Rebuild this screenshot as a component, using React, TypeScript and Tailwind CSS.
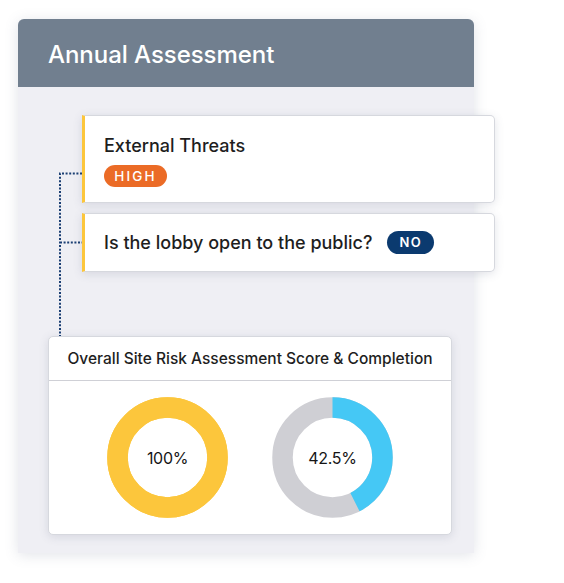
import React from 'react';

function Donut({ value, color, track, label }: { value: number; color: string; track: string; label: string }) {
  const r = 50;
  const c = 2 * Math.PI * r;
  return (
    <div className="relative w-[121px] h-[121px]">
      <svg width="121" height="121" viewBox="0 0 121 121" className="-rotate-90">
        <circle cx="60.5" cy="60.5" r={r} fill="none" stroke={track} strokeWidth="20.5" />
        <circle
          cx="60.5"
          cy="60.5"
          r={r}
          fill="none"
          stroke={color}
          strokeWidth="20.5"
          strokeDasharray={`${(value / 100) * c} ${c}`}
        />
      </svg>
      <div className="absolute inset-0 flex items-center justify-center text-[16px] text-[#151515] tracking-[-0.3px]">
        {label}
      </div>
    </div>
  );
}

export default function App() {
  return (
    <div className="w-[564px] h-[583px] bg-white pt-[19px] pl-[18px] font-['Inter','Noto_Sans',sans-serif]">
      <div className="w-[456px] h-[534px] rounded-t-[6px] bg-[#efeff4] shadow-[0_2px_14px_rgba(90,100,130,0.18)] flex flex-col">
        <div className="h-[68px] shrink-0 rounded-t-[6px] bg-[#717f8f] flex items-center pl-[30px] pt-[3px]">
          <h1 className="text-white text-[24px] tracking-[-0.05px] font-medium">Annual Assessment</h1>
        </div>

        <div className="relative flex-1 flex flex-col pt-[28px]">
          <svg
            className="absolute left-[40px] top-[85px]"
            width="26"
            height="164"
            viewBox="0 0 26 164"
          >
            <path
              d="M24 1.5 H2 V164 M2 70.5 H24"
              fill="none"
              stroke="#1b3f73"
              strokeWidth="2"
              strokeDasharray="2 1.6"
            />
          </svg>

          <div className="ml-[64px] w-[413px] h-[88px] shrink-0 bg-white rounded-r-[5px] border border-[#d6d8de] border-l-[3px] border-l-[#fcc63c] shadow-[0_2px_10px_rgba(80,90,120,0.16)] pl-[19px] pt-[18px]">
            <div className="text-[18px] font-medium text-[#1e1e1e] leading-[24px] tracking-[0px]">External Threats</div>
            <div className="mt-[7px] inline-flex items-center justify-center h-[22px] w-[63px] rounded-full bg-[#eb6b26] text-white text-[13.5px] font-medium tracking-[2.2px]">
              HIGH
            </div>
          </div>

          <div className="mt-[10px] ml-[64px] w-[413px] h-[59px] shrink-0 bg-white rounded-r-[5px] border border-[#d6d8de] border-l-[3px] border-l-[#fcc63c] shadow-[0_2px_10px_rgba(80,90,120,0.16)] pl-[19px] flex items-center">
            <div className="text-[18px] font-medium text-[#1e1e1e] tracking-[0px]">Is the lobby open to the public?</div>
            <div className="ml-[15px] inline-flex items-center justify-center h-[23px] w-[47px] rounded-full bg-[#0b3a6f] text-white text-[13px] font-semibold tracking-[1.5px]">
              NO
            </div>
          </div>

          <div className="mt-[64px] ml-[30px] w-[404px] h-[199px] shrink-0 bg-white rounded-[5px] border border-[#d6d8de] shadow-[0_2px_10px_rgba(80,90,120,0.16)] flex flex-col">
            <div className="h-[44px] shrink-0 border-b border-[#cfd0d6] flex items-center justify-center text-[15.5px] font-medium text-[#1e1e1e] tracking-[0px]">
              Overall Site Risk Assessment Score &amp; Completion
            </div>
            <div className="flex-1 flex items-center pl-[58px] gap-[44px]">
              <Donut value={100} color="#fcc63c" track="#fcc63c" label="100%" />
              <Donut value={42.5} color="#45c8f5" track="#cfcfd4" label="42.5%" />
            </div>
          </div>
        </div>
      </div>
    </div>
  );
}
